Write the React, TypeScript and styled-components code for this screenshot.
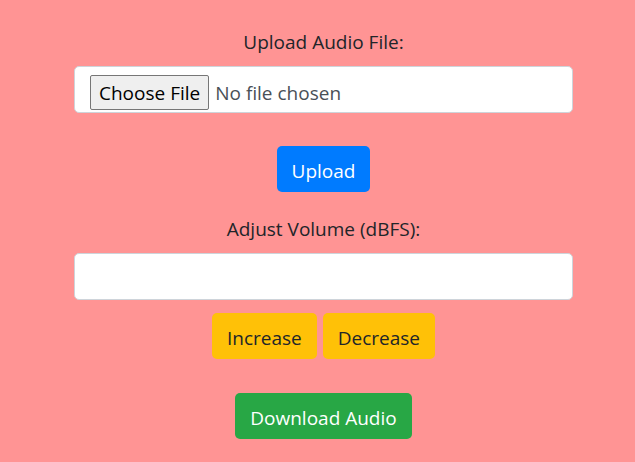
import { createGlobalStyle } from 'styled-components';
import styled from 'styled-components';

const GlobalStyle = createGlobalStyle`
  html, body {
    margin: 0;
    padding: 0;
    background: #ff9494;
  }
  body {
    font-family: "Open Sans", "Noto Sans", sans-serif;
    color: #212529;
  }
`;

const Page = styled.div`
  min-height: 462px;
  box-sizing: border-box;
  padding: 27px 0 0 12px;
  display: flex;
  justify-content: center;
`;

const Form = styled.form`
  width: 499px;
  display: flex;
  flex-direction: column;
  align-items: center;
`;

const Label = styled.label`
  font-size: 19px;
  line-height: 30px;
  margin-bottom: 9px;
`;

const Field = styled.input<{ $file?: boolean }>`
  box-sizing: border-box;
  width: 100%;
  height: 47px;
  padding: ${p => (p.$file ? '8px 15px 0' : '0 15px')};
  background: #fff;
  border: 1px solid #ced4da;
  border-radius: 5px;
  font-family: inherit;
  font-size: 19px;
  color: #495057;
  outline: none;

  &::file-selector-button {
    font-family: inherit;
    font-size: 19px;
    color: #000;
    height: 35px;
    padding: 0 8px;
    margin-right: 6px;
    background: #efefef;
    border: 1px solid #767676;
    border-radius: 2px;
  }
`;

const Row = styled.div<{ $top: number }>`
  display: flex;
  gap: 6px;
  margin-top: ${p => p.$top}px;
`;

const colors = {
  primary: { bg: '#007bff', fg: '#fff' },
  warning: { bg: '#ffc107', fg: '#212529' },
  success: { bg: '#28a745', fg: '#fff' },
};

const Button = styled.button<{ $variant: keyof typeof colors }>`
  height: 46px;
  padding: 3px 15px 0;
  border: none;
  border-radius: 5px;
  font-family: inherit;
  font-size: 19px;
  background: ${p => colors[p.$variant].bg};
  color: ${p => colors[p.$variant].fg};
  cursor: pointer;
`;

const Spacer = styled.div<{ $h: number }>`
  height: ${p => p.$h}px;
`;

export default function App() {
  return (
    <>
      <GlobalStyle />
      <Page>
        <Form onSubmit={e => e.preventDefault()}>
          <Label htmlFor="audio">Upload Audio File:</Label>
          <Field id="audio" type="file" accept="audio/*" $file />
          <Row $top={33}>
            <Button $variant="primary" type="button">Upload</Button>
          </Row>
          <Spacer $h={22} />
          <Label htmlFor="vol">Adjust Volume (dBFS):</Label>
          <Field id="vol" type="number" />
          <Row $top={13}>
            <Button $variant="warning" type="button">Increase</Button>
            <Button $variant="warning" type="button">Decrease</Button>
          </Row>
          <Row $top={34}>
            <Button $variant="success" type="button">Download Audio</Button>
          </Row>
        </Form>
      </Page>
    </>
  );
}
